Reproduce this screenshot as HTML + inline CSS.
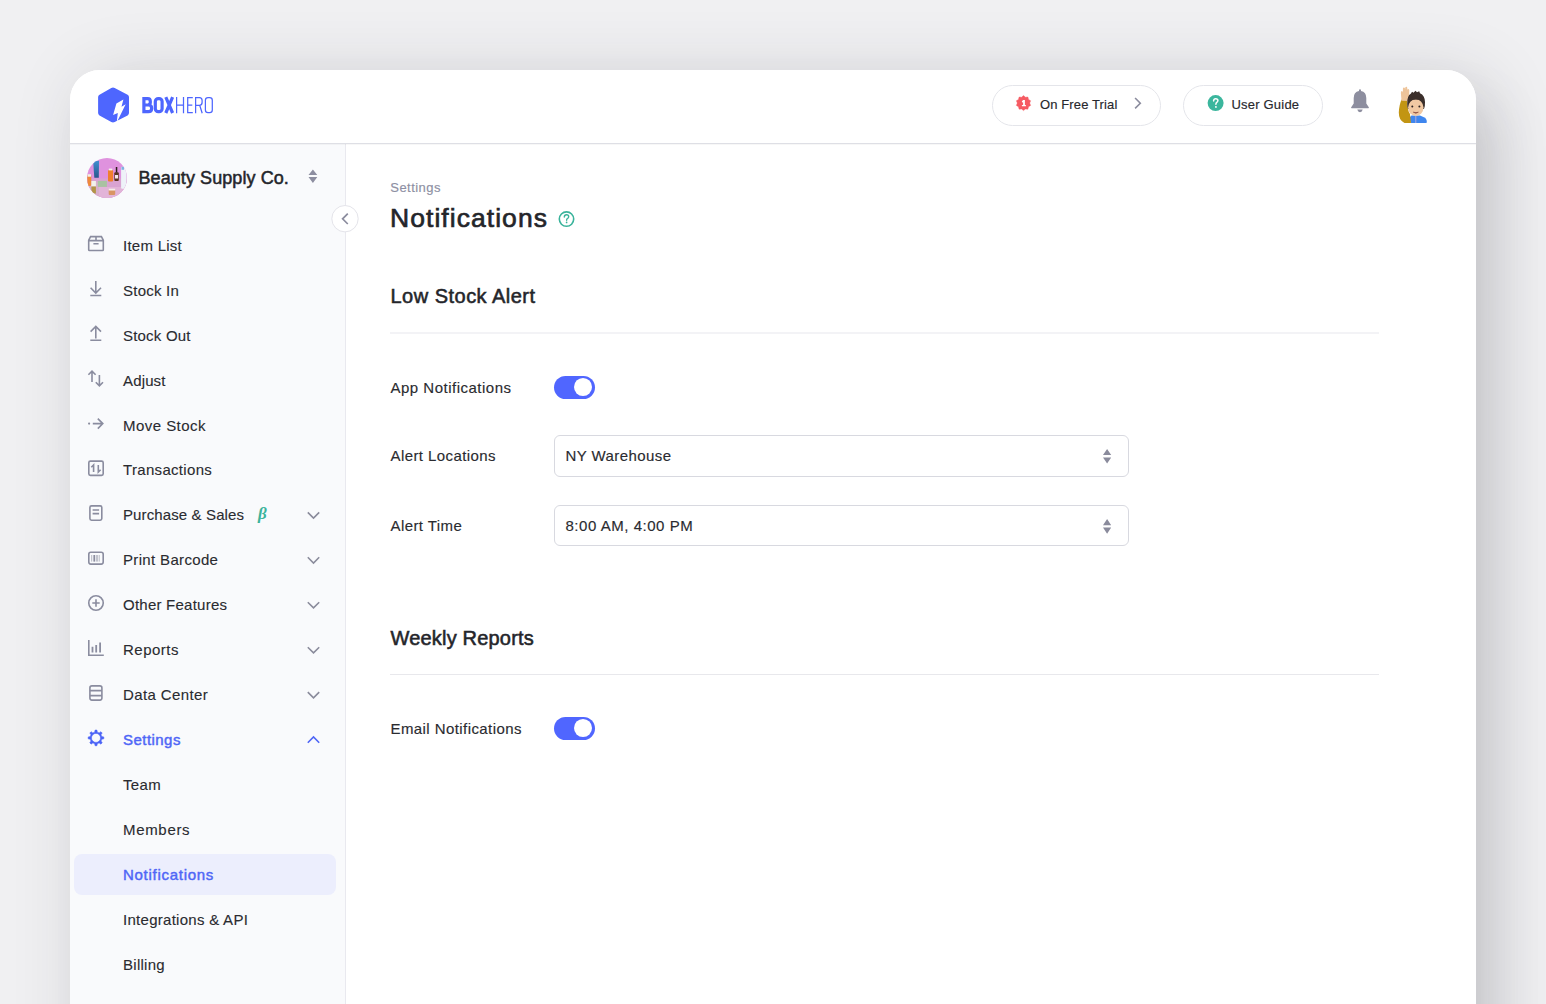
<!DOCTYPE html>
<html><head><meta charset="utf-8">
<style>
*{box-sizing:border-box;margin:0;padding:0}
html,body{width:1546px;height:1004px;overflow:hidden}
body{background:#f0f0f2;font-family:"Liberation Sans",sans-serif;color:#27282d;position:relative}
.card{position:absolute;left:70px;top:70px;width:1406px;height:1100px;background:#fff;border-radius:30px;overflow:hidden;box-shadow:12px 8px 70px rgba(40,40,50,.16), 30px 30px 60px -10px rgba(40,40,50,.1)}
.hdr{position:absolute;left:0;top:0;width:1406px;height:74px;border-bottom:1px solid #dedfe5;background:#fff}
.side{position:absolute;left:0;top:74px;width:276px;height:1100px;background:#f9fafc;border-right:1px solid #e9e9ef}
.abs{position:absolute}
.t{position:absolute;white-space:nowrap;line-height:1}
.nav{font-size:15px;color:#2a2b30;letter-spacing:.23px;-webkit-text-stroke:.12px #2a2b30}
.ico{position:absolute}
.chev{position:absolute}
.lbl{font-size:15px;color:#2a2b30;letter-spacing:.42px;-webkit-text-stroke:.15px #2a2b30}
</style></head><body>
<div class="card">
  <div class="hdr">
    <!-- logo -->
    <svg class="abs" style="left:0;top:0" width="200" height="74" viewBox="70 70 200 74">
      <path d="M111.3 87.9 Q113 87 114.7 87.9 L127.6 94.7 Q129 95.5 129 97 L129 113.1 Q129 114.6 127.6 115.4 L114.7 122.1 Q113 123 111.3 122.1 L99.5 115.4 Q98.1 114.6 98.1 113.1 L98.1 97 Q98.1 95.5 99.5 94.7 Z" fill="#4e66fe"/>
      <path d="M123.4 99.5 L116.4 103.5 L113.1 115.1 L117.8 113.1 L116.7 122.6 L125.7 104.3 L121.5 106.7 Z" fill="#fff"/>
      <g fill="none" stroke="#4e66fe">
        <path d="M142.3 98.6 L147.8 98.6 Q150.3 98.6 150.3 101.3 L150.3 102.6 Q150.3 105 147.8 105 L143.9 105 M143.9 97 L143.9 113.3 M143.9 105 L148.3 105 Q151.6 105 151.6 107.9 L151.6 109.1 Q151.6 111.7 148.3 111.7 L142.3 111.7" stroke-width="3.2"/>
        <rect x="155.3" y="98.6" width="6.8" height="13.1" rx="3" stroke-width="3.2"/>
        <path d="M165.8 97.2 L172.6 113 M172.6 97.2 L165.8 113" stroke-width="3.2"/>
        <path d="M176.6 97 L176.6 113.3 M183.5 97 L183.5 113.3 M176.6 105 L183.5 105 M192.8 97.6 L187.7 97.6 L187.7 112.7 L192.8 112.7 M187.7 105.2 L192.3 105.2 M195.6 113.3 L195.6 97.6 L199.5 97.6 Q202.1 97.6 202.1 100.5 L202.1 102.2 Q202.1 105.3 199.5 105.3 L195.6 105.3 M199.7 105.3 L202.2 113.3" stroke-width="1.25"/>
        <rect x="205.4" y="97.6" width="6.9" height="15.1" rx="2.6" stroke-width="1.25"/>
      </g>
    </svg>
    <!-- pills -->
    <div class="abs" style="left:922px;top:15px;width:169px;height:41px;border:1px solid #e4e5ea;border-radius:21px"></div>
    <svg class="abs" style="left:0;top:0" width="1406" height="74" viewBox="70 70 1406 74"><path d="M1023.50 95.60 L1025.42 97.20 L1027.91 97.03 L1028.52 99.46 L1030.63 100.78 L1029.70 103.10 L1030.63 105.42 L1028.52 106.74 L1027.91 109.17 L1025.42 109.00 L1023.50 110.60 L1021.58 109.00 L1019.09 109.17 L1018.48 106.74 L1016.37 105.42 L1017.30 103.10 L1016.37 100.78 L1018.48 99.46 L1019.09 97.03 L1021.58 97.20 Z" fill="#f65b63" stroke="#f65b63" stroke-width=".4" stroke-linejoin="round"/><path d="M1023.1 99.9 L1024.9 99.9 L1024.9 105 L1025.9 105 L1025.9 106.3 L1021.9 106.3 L1021.9 105 L1023.1 105 L1023.1 102.2 L1022 102.6 L1021.9 101.3 Z" fill="#fff"/></svg>
    <div class="t" style="left:970px;top:28px;font-size:13px;color:#27282d;letter-spacing:.12px;-webkit-text-stroke:.15px #27282d">On Free Trial</div>
    <svg class="abs" style="left:1062px;top:27px" width="10" height="13" viewBox="0 0 10 13"><path d="M3.1 1 L8.3 6.2 L3.1 11.4" fill="none" stroke="#8b8c9e" stroke-width="1.6"/></svg>

    <div class="abs" style="left:1113px;top:15px;width:140px;height:41px;border:1px solid #e4e5ea;border-radius:21px"></div>
    <svg class="abs" style="left:0;top:0" width="1406" height="74" viewBox="70 70 1406 74">
      <circle cx="1215.6" cy="103.1" r="8" fill="#3bb69d"/>
      <path d="M1213.6 100.9 Q1213.7 98.7 1215.7 98.7 Q1217.9 98.7 1217.9 100.6 Q1217.9 101.7 1216.8 102.4 Q1215.9 103 1215.9 104.3" fill="none" stroke="#fff" stroke-width="1.5" stroke-linecap="round"/>
      <circle cx="1215.9" cy="106.9" r=".95" fill="#fff"/>
    </svg>
    <div class="t" style="left:1161.5px;top:28px;font-size:13px;color:#27282d;letter-spacing:.2px;-webkit-text-stroke:.15px #27282d">User Guide</div>

    <!-- bell -->
    <svg class="abs" style="left:1279px;top:18px" width="22" height="26" viewBox="0 0 22 26">
      <path d="M11 1.2 Q12 1.2 12 2.4 L12 3 Q17.3 4 17.3 10 L17.3 15.5 L19.8 19.3 Q20.3 20.3 19.2 20.3 L2.8 20.3 Q1.7 20.3 2.2 19.3 L4.7 15.5 L4.7 10 Q4.7 4 10 3 L10 2.4 Q10 1.2 11 1.2 Z" fill="#8d8e9f"/>
      <path d="M8.3 21.6 L13.7 21.6 Q13.2 24.2 11 24.2 Q8.8 24.2 8.3 21.6 Z" fill="#8d8e9f"/>
    </svg>
    <!-- memoji avatar -->
    <svg class="abs" style="left:0;top:0" width="1406" height="74" viewBox="70 70 1406 74">
      <path d="M1410.5 123 L1426.6 123 Q1427.5 119.5 1424.5 117.5 L1420 115.6 L1411.5 115.6 Q1409.5 117 1409.5 119 Z" fill="#3f86ee"/>
      <path d="M1415.8 116 L1415.8 123" stroke="#c9b3d6" stroke-width=".8"/>
      <path d="M1401.6 99.5 L1407.2 99.8 Q1407 110 1410 114 L1411 123 L1404.5 123 Q1398.8 120.5 1398.8 112.5 Q1399.2 104.5 1401.6 99.5 Z" fill="#c29513"/>
      <path d="M1401.5 100.8 L1400.9 93.5 Q1400.6 90.8 1401.9 90.9 Q1402.8 91 1402.9 92.4 L1402.9 88.8 Q1403.1 87.2 1404.1 87.4 Q1405 87.6 1405.1 89 L1405.3 87.4 Q1405.7 86.4 1406.6 86.7 Q1407.4 87.1 1407.3 88.6 L1407.4 89.8 Q1408 88.8 1408.8 89.2 Q1409.5 89.7 1409.3 91.2 L1409.1 95.8 L1410.6 94.7 Q1411.6 94.5 1411.3 95.7 L1408.4 101 Z" fill="#eec49a"/>
      <path d="M1407.2 104 Q1406.8 96 1411 93.5 L1412 91.8 L1413.5 92.8 L1415.5 90.8 L1417 92.3 L1419.2 91.2 L1420 93.3 Q1424.8 95.5 1425 102 Q1425.2 106 1424 109 L1408 109 Q1407.2 106.5 1407.2 104 Z" fill="#3b2f2b"/>
      <ellipse cx="1415.8" cy="107.6" rx="7.7" ry="8.4" fill="#f1c9a3"/>
      <path d="M1408.2 104 Q1409 96.8 1415.8 96.6 Q1422.6 96.8 1423.5 104 Q1421 99.5 1415.8 99.6 Q1410.5 99.5 1408.2 104 Z" fill="#3b2f2b"/>
      <circle cx="1412.3" cy="106.6" r="1" fill="#2b2222"/>
      <circle cx="1419.4" cy="106.6" r="1" fill="#2b2222"/>
      <path d="M1413.3 112.2 Q1415.8 114.2 1418.4 112.2 Q1415.8 113 1413.3 112.2 Z" fill="#8a4a40" stroke="#8a4a40" stroke-width=".6"/>
    </svg>
  </div>

  <div class="side"></div>
  <div class="abs" style="left:0;top:74px;width:1406px;height:1px;background:rgba(60,60,80,.045)"></div>
  <div class="abs" style="left:3.5px;top:784px;width:262.5px;height:41px;background:#eceefd;border-radius:8px"></div>
  <div class="t nav" style="left:53px;top:167.8px;letter-spacing:0.26px">Item List</div>
  <div class="t nav" style="left:53px;top:212.7px;letter-spacing:0.24px">Stock In</div>
  <div class="t nav" style="left:53px;top:257.6px;letter-spacing:0.2px">Stock Out</div>
  <div class="t nav" style="left:53px;top:302.6px;letter-spacing:0.15px">Adjust</div>
  <div class="t nav" style="left:53px;top:347.5px;letter-spacing:0.46px">Move Stock</div>
  <div class="t nav" style="left:53px;top:392.4px;letter-spacing:0.32px">Transactions</div>
  <div class="t nav" style="left:53px;top:437.3px;letter-spacing:0.12px">Purchase &amp; Sales</div>
  <div class="t nav" style="left:53px;top:482.2px;letter-spacing:0.34px">Print Barcode</div>
  <div class="t nav" style="left:53px;top:527.2px;letter-spacing:0.24px">Other Features</div>
  <div class="t nav" style="left:53px;top:572.1px;letter-spacing:0.5px">Reports</div>
  <div class="t nav" style="left:53px;top:617.0px;letter-spacing:0.38px">Data Center</div>
  <div class="t nav" style="left:53px;top:661.9px;color:#4f66f6;-webkit-text-stroke:.45px #4f66f6;letter-spacing:0.46px">Settings</div>
  <div class="t nav" style="left:53px;top:706.8px;letter-spacing:0.33px">Team</div>
  <div class="t nav" style="left:53px;top:751.8px;letter-spacing:0.68px">Members</div>
  <div class="t nav" style="left:53px;top:796.7px;color:#4f66f6;-webkit-text-stroke:.45px #4f66f6;letter-spacing:0.72px">Notifications</div>
  <div class="t nav" style="left:53px;top:841.6px;letter-spacing:0.28px">Integrations &amp; API</div>
  <div class="t nav" style="left:53px;top:886.5px;letter-spacing:0.27px">Billing</div>


  <!-- icons overlay in page coords -->
  <svg class="abs" style="left:0;top:0" width="1406" height="934" viewBox="70 70 1406 934">
    <g fill="none" stroke="#8a8c9f" stroke-width="1.6" stroke-linecap="butt" stroke-linejoin="miter">
      <!-- item list box -->
      <path d="M89.5 250.5 L102.5 250.5 Q103.3 250.5 103.3 249.7 L103.3 240.2 L101.4 236.6 L90.6 236.6 L88.7 240.2 L88.7 249.7 Q88.7 250.5 89.5 250.5 Z M88.7 240.6 L103.3 240.6 M96 236.6 L96 240.6 M93.4 243.8 L98.6 243.8"/>
      <!-- stock in -->
      <path d="M95.8 281 L95.8 293 M90.6 287.8 L95.8 293 L101 287.8 M90.3 295.5 L101.3 295.5"/>
      <!-- stock out -->
      <path d="M95.8 338.5 L95.8 326.4 M90.6 331.6 L95.8 326.4 L101 331.6 M90.3 340.3 L101.3 340.3"/>
      <!-- adjust -->
      <path d="M92 382 L92 371.2 M88.4 374.8 L92 371.2 L95.6 374.8 M99.4 375 L99.4 385.8 M95.8 382.2 L99.4 385.8 L103 382.2"/>
      <!-- move stock -->
      <path d="M92.8 423.6 L102.8 423.6 M97.8 418.6 L102.8 423.6 L97.8 428.6"/>
      <!-- transactions -->
      <rect x="88.8" y="461.1" width="14.4" height="14.3" rx="1.6"/>
      <path d="M93.6 472 L93.6 465 L91.3 467.3 M98.3 465 L98.3 472 L100.6 469.7"/>
      <!-- purchase -->
      <rect x="89.9" y="505.9" width="11.9" height="14.3" rx="1.6"/>
      <path d="M92.6 510 L99.1 510 M92.6 513.6 L99.1 513.6"/>
      <!-- barcode -->
      <rect x="88.8" y="552.3" width="14.4" height="11.8" rx="2"/>
      <!-- other features -->
      <circle cx="96" cy="603" r="7.25"/>
      <path d="M96 599.3 L96 606.7 M92.3 603 L99.7 603"/>
      <!-- reports -->
      <path d="M88.8 640 L88.8 655.3 L103.8 655.3"/>
      <path d="M92.5 646.8 L92.5 652.4 M96.2 645 L96.2 652.4 M100.1 642.4 L100.1 652.4" stroke-width="1.8"/>
      <!-- data center -->
      <rect x="89.9" y="685.9" width="12" height="14.2" rx="2"/>
      <path d="M89.9 690.6 L101.9 690.6 M89.9 695.6 L101.9 695.6"/>
      <!-- chevrons -->
      <path d="M307.8 512.4 L313.5 518.1 L319.2 512.4 M307.8 557.3 L313.5 563 L319.2 557.3 M307.8 602.2 L313.5 607.9 L319.2 602.2 M307.8 647.2 L313.5 652.9 L319.2 647.2 M307.8 692.1 L313.5 697.8 L319.2 692.1" stroke="#8b8c9c"/>
    </g>
    <!-- barcode bars -->
    <g fill="#8a8c9e">
      <rect x="91.2" y="555" width="1" height="6.6" opacity=".6"/>
      <rect x="93.4" y="555" width="1.8" height="6.6"/>
      <rect x="96.5" y="555" width="1" height="6.6"/>
      <rect x="98.7" y="555" width="1" height="6.6" opacity=".6"/>
      <circle cx="89.1" cy="423.6" r="1.1"/>
    </g>
    <!-- settings gear -->
    <path d="M93.74 732.45 L94.67 732.15 L95.04 730.06 L96.96 730.06 L97.33 732.15 L98.26 732.45 L99.13 732.90 L100.86 731.67 L102.23 733.04 L101.00 734.77 L101.45 735.64 L101.75 736.57 L103.84 736.94 L103.84 738.86 L101.75 739.23 L101.45 740.16 L101.00 741.03 L102.23 742.76 L100.86 744.13 L99.13 742.90 L98.26 743.35 L97.33 743.65 L96.96 745.74 L95.04 745.74 L94.67 743.65 L93.74 743.35 L92.87 742.90 L91.14 744.13 L89.77 742.76 L91.00 741.03 L90.55 740.16 L90.25 739.23 L88.16 738.86 L88.16 736.94 L90.25 736.57 L90.55 735.64 L91.00 734.77 L89.77 733.04 L91.14 731.67 L92.87 732.90 Z M100.5 737.9 A4.5 4.5 0 1 0 91.5 737.9 A4.5 4.5 0 1 0 100.5 737.9 Z" fill="#4b63f6" fill-rule="evenodd" stroke="#4b63f6" stroke-width=".5" stroke-linejoin="round"/>
    <path d="M307.8 742.7 L313.5 737 L319.2 742.7" fill="none" stroke="#4f66f6" stroke-width="1.6"/>
    <!-- company sort arrows -->
    <path d="M308.5 175 L312.9 169.4 L317.3 175 Z M308.5 176.9 L312.9 183 L317.3 176.9 Z" fill="#8d8ea0"/>
    <!-- collapse btn -->
    <circle cx="345" cy="218.7" r="13.2" fill="#fff" stroke="#e4e4ea" stroke-width="1"/>
    <path d="M347.8 213.6 L342.6 218.8 L347.8 224" fill="none" stroke="#8b8c9e" stroke-width="1.7"/>
    <!-- company avatar -->
    <defs><clipPath id="av"><circle cx="107" cy="178" r="20"/></clipPath></defs>
    <g clip-path="url(#av)">
      <rect x="87" y="158" width="41" height="41" fill="#df92de"/>
      <rect x="87" y="178.5" width="41" height="21" fill="#d9a3d2"/>
      <rect x="99" y="187" width="27" height="12" fill="#e2b4d8"/>
      <rect x="87" y="182" width="12" height="17" fill="#d8b0cc"/>
      <defs><linearGradient id="tb" x1="0" y1="0" x2="0" y2="1"><stop offset="0" stop-color="#3f8fd0"/><stop offset="1" stop-color="#2a568c"/></linearGradient></defs>
      <path d="M93.2 161.5 L99 160.8 L98.8 177.8 L94.3 177.8 Z" fill="url(#tb)"/>
      <rect x="108" y="170" width="5.1" height="11.5" rx="1" fill="#f07f2e"/>
      <rect x="108.8" y="168.6" width="3.5" height="1.8" fill="#f6efe8"/>
      <rect x="114.3" y="172.3" width="4.5" height="8.8" rx="1" fill="#5a3322"/>
      <rect x="115" y="175" width="3.1" height="3.5" fill="#f2e8ea"/>
      <rect x="115.8" y="167" width="1.5" height="5.5" fill="#2b1c18"/>
      <rect x="121.1" y="166.8" width="5.5" height="22" rx="1" fill="#eef2f8"/>
      <rect x="121.5" y="166.8" width="2.5" height="3" fill="#7fb2e0"/>
      <rect x="87.3" y="174.5" width="4" height="11.5" rx="1.5" fill="#ef8a3a"/>
      <rect x="87.5" y="174.2" width="3.5" height="2.5" fill="#f4f0ea"/>
      <rect x="91.4" y="181" width="4.5" height="5.5" fill="#f3f1ea"/>
      <rect x="91.4" y="186.5" width="4.5" height="7" fill="#b39547"/>
      <rect x="97.8" y="180.9" width="9.1" height="6" fill="#a9c2a2"/>
      <rect x="108.7" y="188.9" width="6.5" height="6" rx="1" fill="#d99564"/>
      <rect x="108.7" y="188.7" width="6.5" height="1.8" fill="#f5efe9"/>
    </g>
    <!-- beta -->
  </svg>
  <div class="t" id="beta" style="left:188px;top:434.5px;font-family:'Liberation Serif',serif;font-style:italic;font-weight:700;font-size:17px;color:#3bb39b">&#946;</div>
  <div class="t" style="left:68.5px;top:99px;font-size:18px;color:#24252a;letter-spacing:.08px;-webkit-text-stroke:.5px #24252a">Beauty Supply Co.</div>

  <!-- main -->
  <div class="t" style="left:320.3px;top:111px;font-size:13px;color:#8d8fa3;letter-spacing:.45px;-webkit-text-stroke:.15px #8d8fa3">Settings</div>
  <div class="t" style="left:320px;top:135px;font-size:26.5px;color:#24252a;letter-spacing:1.05px;-webkit-text-stroke:.65px #24252a">Notifications</div>

  <svg class="abs" style="left:0;top:0" width="1406" height="934" viewBox="70 70 1406 934">
    <circle cx="566.5" cy="219.1" r="7.2" fill="none" stroke="#3ab39b" stroke-width="1.6"/>
    <path d="M564.3 217 Q564.4 214.8 566.5 214.8 Q568.7 214.8 568.7 216.8 Q568.7 217.9 567.4 218.6 Q566.6 219 566.6 220.2" fill="none" stroke="#3ab39b" stroke-width="1.4" stroke-linecap="round"/>
    <circle cx="566.6" cy="222.4" r=".85" fill="#3ab39b"/>
    <rect x="390" y="332" width="989" height="2" fill="#f3f3f6"/>
    <rect x="390" y="674" width="989" height="1" fill="#e8e8ec"/>
    <path d="M1103 455 L1107.1 448.9 L1111.2 455 Z M1103 457.4 L1107.1 463.5 L1111.2 457.4 Z M1103 525.2 L1107.1 519.1 L1111.2 525.2 Z M1103 527.6 L1107.1 533.7 L1111.2 527.6 Z" fill="#8a8b9c"/>
  </svg>
  <div class="t" style="left:320.5px;top:216.4px;font-size:20px;color:#24252a;letter-spacing:.48px;-webkit-text-stroke:.55px #24252a">Low Stock Alert</div>
  <div class="t lbl" style="left:320.5px;top:310.3px;letter-spacing:.5px">App Notifications</div>
  <div class="abs" style="left:483.5px;top:306px;width:41px;height:23px;border-radius:12px;background:#5066ff"></div>
  <div class="abs" style="left:503.5px;top:307.8px;width:18.6px;height:18.4px;border-radius:50%;background:#fff"></div>
  <div class="t lbl" style="left:320.5px;top:378.3px">Alert Locations</div>
  <div class="abs" style="left:483.5px;top:365px;width:575.5px;height:42px;border:1px solid #d8d9e0;border-radius:6px"></div>
  <div class="t lbl" style="left:495.5px;top:378.3px">NY Warehouse</div>
  <div class="t lbl" style="left:320.5px;top:447.9px">Alert Time</div>
  <div class="abs" style="left:483.5px;top:435px;width:575.5px;height:41px;border:1px solid #d8d9e0;border-radius:6px"></div>
  <div class="t lbl" style="left:495.5px;top:447.9px;letter-spacing:.53px">8:00 AM, 4:00 PM</div>
  <div class="t" style="left:320.5px;top:558px;font-size:20px;color:#24252a;letter-spacing:.19px;-webkit-text-stroke:.55px #24252a">Weekly Reports</div>
  <div class="t lbl" style="left:320.5px;top:651px">Email Notifications</div>
  <div class="abs" style="left:483.5px;top:647px;width:41px;height:23px;border-radius:12px;background:#5066ff"></div>
  <div class="abs" style="left:503.5px;top:648.6px;width:18.6px;height:18.4px;border-radius:50%;background:#fff"></div>
</div>
</body></html>
